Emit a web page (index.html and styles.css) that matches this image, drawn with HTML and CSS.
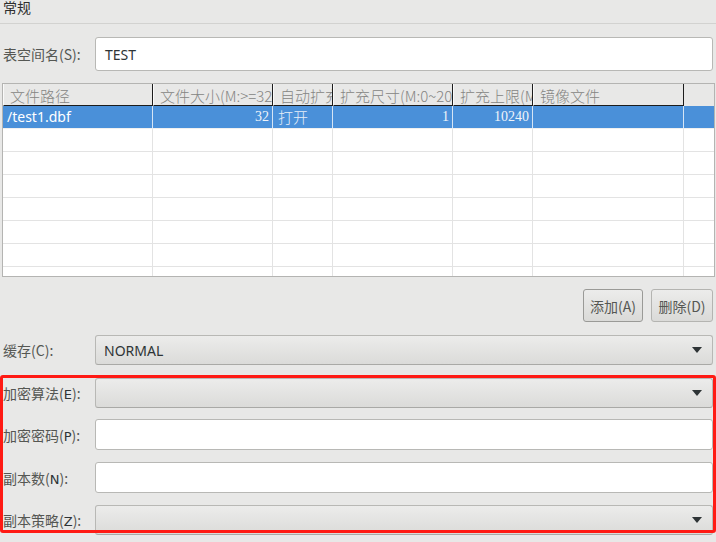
FILE: index.html
```html
<!DOCTYPE html>
<html>
<head>
<meta charset="utf-8">
<link rel="stylesheet" href="styles.css">
</head>
<body>
<div class="page">
  <div class="title">常规</div>

  <div class="row row-name">
    <label class="lbl">表空间名(S):</label>
    <div class="entry">TEST</div>
  </div>

  <div class="tbl">
    <div class="thead">
      <div class="th">文件路径</div>
      <div class="th">文件大小(M:&gt;=32)</div>
      <div class="th">自动扩充</div>
      <div class="th">扩充尺寸(M:0~2048)</div>
      <div class="th">扩充上限(M)</div>
      <div class="th">镜像文件</div>
      <div class="th filler"></div>
    </div>
    <div class="tr sel">
      <div class="td">/test1.dbf</div>
      <div class="td num">32</div>
      <div class="td cjk">打开</div>
      <div class="td num">1</div>
      <div class="td num">10240</div>
      <div class="td"></div>
      <div class="td"></div>
    </div>
    <div class="tr"><div class="td"></div><div class="td"></div><div class="td"></div><div class="td"></div><div class="td"></div><div class="td"></div><div class="td"></div></div>
    <div class="tr"><div class="td"></div><div class="td"></div><div class="td"></div><div class="td"></div><div class="td"></div><div class="td"></div><div class="td"></div></div>
    <div class="tr"><div class="td"></div><div class="td"></div><div class="td"></div><div class="td"></div><div class="td"></div><div class="td"></div><div class="td"></div></div>
    <div class="tr"><div class="td"></div><div class="td"></div><div class="td"></div><div class="td"></div><div class="td"></div><div class="td"></div><div class="td"></div></div>
    <div class="tr"><div class="td"></div><div class="td"></div><div class="td"></div><div class="td"></div><div class="td"></div><div class="td"></div><div class="td"></div></div>
    <div class="tr"><div class="td"></div><div class="td"></div><div class="td"></div><div class="td"></div><div class="td"></div><div class="td"></div><div class="td"></div></div>
    <div class="tr"><div class="td"></div><div class="td"></div><div class="td"></div><div class="td"></div><div class="td"></div><div class="td"></div><div class="td"></div></div>
  </div>

  <div class="buttons">
    <button class="btn btn-focus">添加(A)</button>
    <button class="btn">删除(D)</button>
  </div>

  <div class="row row-cache">
    <label class="lbl">缓存(C):</label>
    <div class="combo"><span>NORMAL</span><svg class="arrow" width="10" height="6" viewBox="0 0 10 6"><path d="M0 0 H10 L5 6 Z" fill="#2e3436"/></svg></div>
  </div>

  <div class="row row-enc">
    <label class="lbl">加密算法(<b>E</b>):</label>
    <div class="combo"><span></span><svg class="arrow" width="10" height="6" viewBox="0 0 10 6"><path d="M0 0 H10 L5 6 Z" fill="#2e3436"/></svg></div>
  </div>

  <div class="row row-pwd">
    <label class="lbl">加密密码(<b>P</b>):</label>
    <div class="entry"></div>
  </div>

  <div class="row row-copies">
    <label class="lbl">副本数(<b>N</b>):</label>
    <div class="entry"></div>
  </div>

  <div class="row row-policy">
    <label class="lbl">副本策略(<b>Z</b>):</label>
    <div class="combo"><span></span><svg class="arrow" width="10" height="6" viewBox="0 0 10 6"><path d="M0 0 H10 L5 6 Z" fill="#2e3436"/></svg></div>
  </div>

  <div class="highlight"></div>
</div>
</body>
</html>
```

FILE: styles.css
```css
html, body {
  margin: 0;
  padding: 0;
  background: #e8e8e7;
}

body {
  font-family: "Noto Sans", "Noto Sans CJK SC", sans-serif;
  font-size: 14px;
  color: #2e3436;
  overflow: hidden;
}

.page {
  position: relative;
  width: 716px;
  height: 542px;
}

.title {
  height: 24px;
  line-height: 16px;
  margin-top: -1px;
  padding-left: 3px;
  border-bottom: 1px solid #d2d2d0;
  color: #2e2e2e;
  font-family: "Noto Sans CJK SC", sans-serif;
  box-sizing: content-box;
}

.row {
  display: flex;
  align-items: center;
  padding-right: 3px;
}

.lbl {
  flex: 0 0 92px;
  padding-left: 3px;
  color: #555753;
  font-family: "Noto Sans CJK SC", sans-serif;
  font-size: 14px;
  white-space: nowrap;
}

.lbl b {
  font-family: "DejaVu Sans", sans-serif;
  font-weight: normal;
  font-size: 13px;
  color: #2e3436;
}

.entry {
  flex: 1;
  box-sizing: border-box;
  background: #fff;
  border: 1px solid #b8b8b5;
  border-radius: 3px;
  padding-left: 9px;
  display: flex;
  align-items: center;
  color: #2e3436;
  font-family: "Noto Sans", sans-serif;
}

.combo {
  flex: 1;
  box-sizing: border-box;
  height: 30px;
  border: 1px solid #b8b8b5;
  border-bottom-color: #a9a9a6;
  border-radius: 3px;
  background: linear-gradient(#ececeb, #dbdbd9);
  display: flex;
  align-items: center;
  justify-content: space-between;
  padding: 0 10px 0 8px;
  color: #2e3436;
  font-family: "Noto Sans", sans-serif;
}

.row-name { margin-top: 13px; }
.row-name .entry { height: 34px; }

.tbl {
  margin: 12px 1px 0 2px;
  box-sizing: border-box;
  height: 194px;
  border: 1px solid #b4b4b2;
  background: #fff;
  overflow: hidden;
}

.thead, .tr {
  display: grid;
  grid-template-columns: 150px 120px 60px 120px 80px 151px 1fr;
}

.th {
  box-sizing: border-box;
  height: 22px;
  background: #e8e8e7;
  border-right: 1px solid #1c1c1c;
  border-bottom: 1px solid #1c1c1c;
  border-left: 1px solid #fafafa;
  padding-left: 6px;
  color: #858583;
  font-family: "Noto Sans CJK SC", sans-serif;
  font-size: 15px;
  font-weight: 300;
  line-height: 23px;
  white-space: nowrap;
  overflow: hidden;
}

.th.filler {
  border: none;
}

.tr {
  height: 23px;
}

.td {
  box-sizing: border-box;
  height: 23px;
  border-right: 1px solid #e3e3e3;
  border-bottom: 1px solid #e3e3e3;
  padding-left: 4px;
  line-height: 22px;
  white-space: nowrap;
  overflow: hidden;
  font-family: "Noto Sans", "Noto Sans CJK SC", sans-serif;
  font-size: 14px;
}

.td:last-child { border-right: none; }

.tr.sel {
  background: #4a90d9;
  color: #fff;
}

.tr.sel .td {
  border-right-color: #d6e5f5;
  border-bottom-color: #f0f0f0;
}

.tr.sel .td:last-child { border-right: none; }

.td.num {
  text-align: right;
  padding-right: 3px;
  font-family: "Liberation Serif", serif;
  font-size: 14px;
  color: #f0f4fa;
}

.td.cjk {
  font-family: "Noto Sans CJK SC", sans-serif;
  font-size: 15px;
  font-weight: 300;
  color: #e6eef8;
  padding-left: 5px;
}

.buttons {
  margin-top: 12px;
  display: flex;
  justify-content: flex-end;
  gap: 8px;
  padding-right: 3px;
}

.btn {
  box-sizing: border-box;
  height: 33px;
  padding: 0 3px;
  border: 1px solid #b4b4b1;
  border-radius: 3px;
  background: linear-gradient(#ececeb, #dadad8);
  color: #555753;
  font-family: "Noto Sans CJK SC", sans-serif;
  font-size: 14px;
  width: 62px;
}

.btn-focus {
  width: 60px;
  border-color: #9a9a97;
}

.row-cache { margin-top: 13px; }
.row-enc { margin-top: 13px; }
.row-pwd { margin-top: 11px; }
.row-pwd .entry { height: 31px; }
.row-copies { margin-top: 12px; }
.row-copies .entry { height: 31px; }
.row-policy { margin-top: 12px; }

.highlight {
  position: absolute;
  left: 0;
  top: 376px;
  width: 716px;
  height: 158px;
  box-sizing: border-box;
  border: 3px solid #ff1a14;
  border-radius: 3px;
  pointer-events: none;
}
```
